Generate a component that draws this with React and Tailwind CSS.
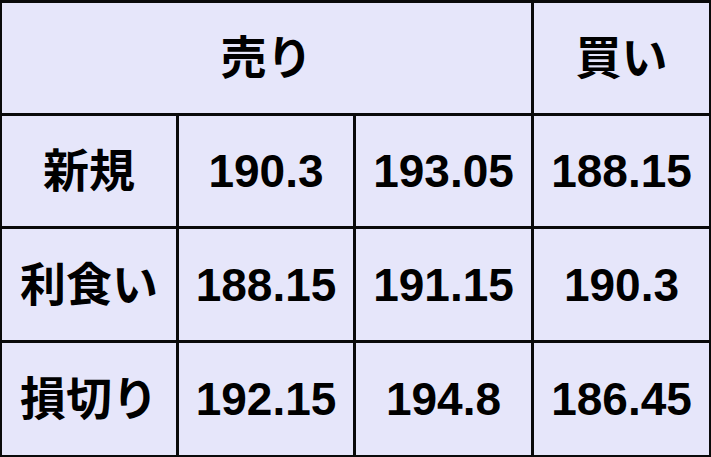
import React from 'react';

const rows = [
  ['新規', '190.3', '193.05', '188.15'],
  ['利食い', '188.15', '191.15', '190.3'],
  ['損切り', '192.15', '194.8', '186.45'],
];

const cell =
  'bg-[#e6e6fa] flex items-center justify-center text-[46px] font-bold text-black leading-none';

const App = () => {
  return (
    <div
      className="w-[711px] h-[457px] bg-[#0a0a0a] grid grid-cols-[174px_174px_175px_175px] grid-rows-[110px_110px_111px_112px] gap-[3px] pt-[3px] pl-[2px]"
      style={{ fontFamily: '"Liberation Sans", "Noto Sans CJK JP", sans-serif' }}
    >
      <div className={`${cell} col-span-3`}>売り</div>
      <div className={cell}>買い</div>
      {rows.map((r) => (
        <React.Fragment key={r[0]}>
          {r.map((v, i) => (
            <div key={i} className={cell}>
              {v}
            </div>
          ))}
        </React.Fragment>
      ))}
    </div>
  );
};

export default App;
